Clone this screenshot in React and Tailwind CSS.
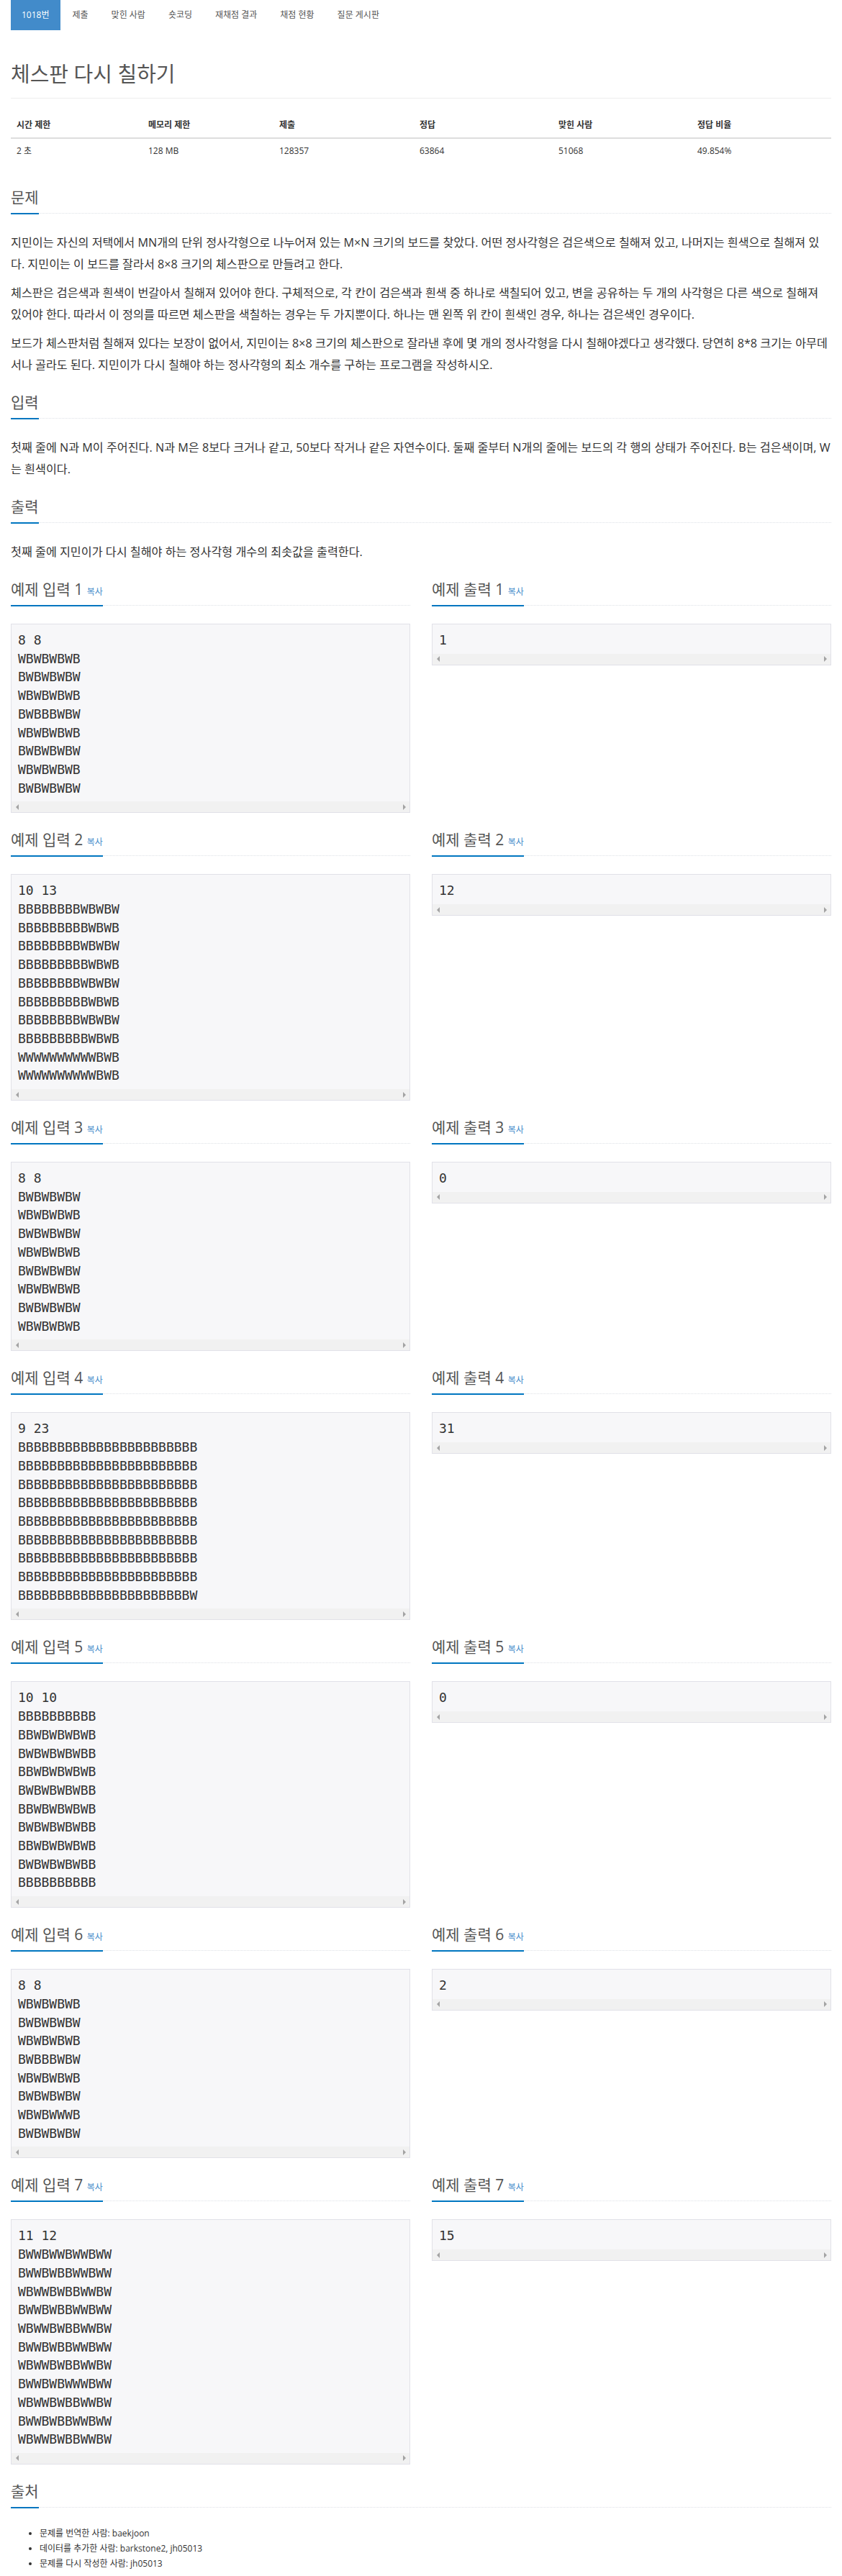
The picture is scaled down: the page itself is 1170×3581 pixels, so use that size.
import React from 'react';

const tabs = ['1018번', '제출', '맞힌 사람', '숏코딩', '재채점 결과', '채점 현황', '질문 게시판'];

const infoHeads = ['시간 제한', '메모리 제한', '제출', '정답', '맞힌 사람', '정답 비율'];
const infoVals = ['2 초', '128 MB', '128357', '63864', '51068', '49.854%'];

const samples = [
  {
    input: `8 8
WBWBWBWB
BWBWBWBW
WBWBWBWB
BWBBBWBW
WBWBWBWB
BWBWBWBW
WBWBWBWB
BWBWBWBW`,
    output: '1',
  },
  {
    input: `10 13
BBBBBBBBWBWBW
BBBBBBBBBWBWB
BBBBBBBBWBWBW
BBBBBBBBBWBWB
BBBBBBBBWBWBW
BBBBBBBBBWBWB
BBBBBBBBWBWBW
BBBBBBBBBWBWB
WWWWWWWWWWBWB
WWWWWWWWWWBWB`,
    output: '12',
  },
  {
    input: `8 8
BWBWBWBW
WBWBWBWB
BWBWBWBW
WBWBWBWB
BWBWBWBW
WBWBWBWB
BWBWBWBW
WBWBWBWB`,
    output: '0',
  },
  {
    input: `9 23
BBBBBBBBBBBBBBBBBBBBBBB
BBBBBBBBBBBBBBBBBBBBBBB
BBBBBBBBBBBBBBBBBBBBBBB
BBBBBBBBBBBBBBBBBBBBBBB
BBBBBBBBBBBBBBBBBBBBBBB
BBBBBBBBBBBBBBBBBBBBBBB
BBBBBBBBBBBBBBBBBBBBBBB
BBBBBBBBBBBBBBBBBBBBBBB
BBBBBBBBBBBBBBBBBBBBBBW`,
    output: '31',
  },
  {
    input: `10 10
BBBBBBBBBB
BBWBWBWBWB
BWBWBWBWBB
BBWBWBWBWB
BWBWBWBWBB
BBWBWBWBWB
BWBWBWBWBB
BBWBWBWBWB
BWBWBWBWBB
BBBBBBBBBB`,
    output: '0',
  },
  {
    input: `8 8
WBWBWBWB
BWBWBWBW
WBWBWBWB
BWBBBWBW
WBWBWBWB
BWBWBWBW
WBWBWWWB
BWBWBWBW`,
    output: '2',
  },
  {
    input: `11 12
BWWBWWBWWBWW
BWWBWBBWWBWW
WBWWBWBBWWBW
BWWBWBBWWBWW
WBWWBWBBWWBW
BWWBWBBWWBWW
WBWWBWBBWWBW
BWWBWBWWWBWW
WBWWBWBBWWBW
BWWBWBBWWBWW
WBWWBWBBWWBW`,
    output: '15',
  },
];

// section title with the blue underline + dotted rule
function Headline({ title, copy }) {
  return (
    <div className="mt-[15px] mb-[25px] flex border-b border-dotted border-[#dde1e6]">
      <h2 className="-mb-[2px] border-b-2 border-[#0076c0] pb-[10px] text-[21px] leading-[24px] font-normal text-[#555]">
        {title}
        {copy && (
          <>
            {' '}
            <span className="text-[12px] leading-none text-[#428bca]">복사</span>
          </>
        )}
      </h2>
    </div>
  );
}

function SampleBox({ text }) {
  return (
    <div className="mb-[10px] border border-[#e1e1e8] bg-[#f7f7f9]">
      <pre className="px-[9px] pt-[9px] pb-[6px] font-['DejaVu_Sans_Mono',monospace] text-[18px] leading-[1.42857] text-[#333]">
        {text}
      </pre>
      {/* horizontal scrollbar track */}
      <div className="flex h-[15px] items-center justify-between bg-[#f1f1f1]">
        <span className="flex w-[15px] justify-center">
          <span className="h-0 w-0 border-y-[4px] border-r-[4px] border-y-transparent border-r-[#a3a3a3]" />
        </span>
        <span className="flex w-[15px] justify-center">
          <span className="h-0 w-0 border-y-[4px] border-l-[4px] border-y-transparent border-l-[#a3a3a3]" />
        </span>
      </div>
    </div>
  );
}

function Section({ title, children }) {
  return (
    <section>
      <Headline title={title} />
      <div className="text-[16.2px] leading-[30px] text-[#333]">{children}</div>
    </section>
  );
}

export default function App() {
  return (
    <div className="w-[1170px] bg-white px-[15px] font-['Open_Sans','Noto_Sans_CJK_KR',sans-serif] text-[#333]">
      <div className="flex h-[42px] gap-[2px] text-[12px]">
        {tabs.map((t, i) => (
          <div
            key={t}
            className={
              i === 0
                ? 'flex items-center bg-[#428bca] px-[15px] text-white'
                : 'flex items-center px-[15px] text-[#555]'
            }
          >
            {t}
          </div>
        ))}
      </div>

      <div className="flex flex-col">
        <h1 className="mt-[44px] border-b border-[#eee] pb-[17px] text-[29px] leading-[33px] font-normal text-[#555]">
          체스판 다시 칠하기
        </h1>

        <div className="mt-[20px] mb-[20px] text-[12px] text-[#333]">
          <div className="grid grid-cols-[183px_182px_195px_193px_193px_194px] border-b-2 border-[#ddd] font-bold">
            {infoHeads.map((h) => (
              <div key={h} className="px-[8px] py-[8px] leading-[18px]">
                {h}
              </div>
            ))}
          </div>
          <div className="grid grid-cols-[183px_182px_195px_193px_193px_194px]">
            {infoVals.map((v) => (
              <div key={v} className="px-[8px] py-[8px] leading-[18px]">
                {v}
              </div>
            ))}
          </div>
        </div>

        <Section title="문제">
          <p className="mb-[10px]">
            지민이는 자신의 저택에서 MN개의 단위 정사각형으로 나누어져 있는 M×N 크기의 보드를 찾았다. 어떤 정사각형은 검은색으로 칠해져 있고, 나머지는 흰색으로 칠해져 있다. 지민이는 이 보드를 잘라서 8×8 크기의 체스판으로 만들려고 한다.
          </p>
          <p className="mb-[10px]">
            체스판은 검은색과 흰색이 번갈아서 칠해져 있어야 한다. 구체적으로, 각 칸이 검은색과 흰색 중 하나로 색칠되어 있고, 변을 공유하는 두 개의 사각형은 다른 색으로 칠해져 있어야 한다. 따라서 이 정의를 따르면 체스판을 색칠하는 경우는 두 가지뿐이다. 하나는 맨 왼쪽 위 칸이 흰색인 경우, 하나는 검은색인 경우이다.
          </p>
          <p className="mb-[10px]">
            보드가 체스판처럼 칠해져 있다는 보장이 없어서, 지민이는 8×8 크기의 체스판으로 잘라낸 후에 몇 개의 정사각형을 다시 칠해야겠다고 생각했다. 당연히 8*8 크기는 아무데서나 골라도 된다. 지민이가 다시 칠해야 하는 정사각형의 최소 개수를 구하는 프로그램을 작성하시오.
          </p>
        </Section>

        <Section title="입력">
          <p className="mb-[10px]">
            첫째 줄에 N과 M이 주어진다. N과 M은 8보다 크거나 같고, 50보다 작거나 같은 자연수이다. 둘째 줄부터 N개의 줄에는 보드의 각 행의 상태가 주어진다. B는 검은색이며, W는 흰색이다.
          </p>
        </Section>

        <Section title="출력">
          <p className="mb-[10px]">첫째 줄에 지민이가 다시 칠해야 하는 정사각형 개수의 최솟값을 출력한다.</p>
        </Section>

        <div className="grid grid-cols-2 gap-x-[30px]">
          {samples.map((s, i) => (
            <React.Fragment key={i}>
              <div>
                <Headline title={`예제 입력 ${i + 1}`} copy />
                <SampleBox text={s.input} />
              </div>
              <div>
                <Headline title={`예제 출력 ${i + 1}`} copy />
                <SampleBox text={s.output} />
              </div>
            </React.Fragment>
          ))}
        </div>

        <section>
          <Headline title="출처" />
          <ul className="mb-[10px] list-disc pl-[40px] text-[12px] leading-[21px] text-[#333]">
            <li>문제를 번역한 사람: baekjoon</li>
            <li>데이터를 추가한 사람: barkstone2, jh05013</li>
            <li>문제를 다시 작성한 사람: jh05013</li>
          </ul>
        </section>
      </div>
    </div>
  );
}
